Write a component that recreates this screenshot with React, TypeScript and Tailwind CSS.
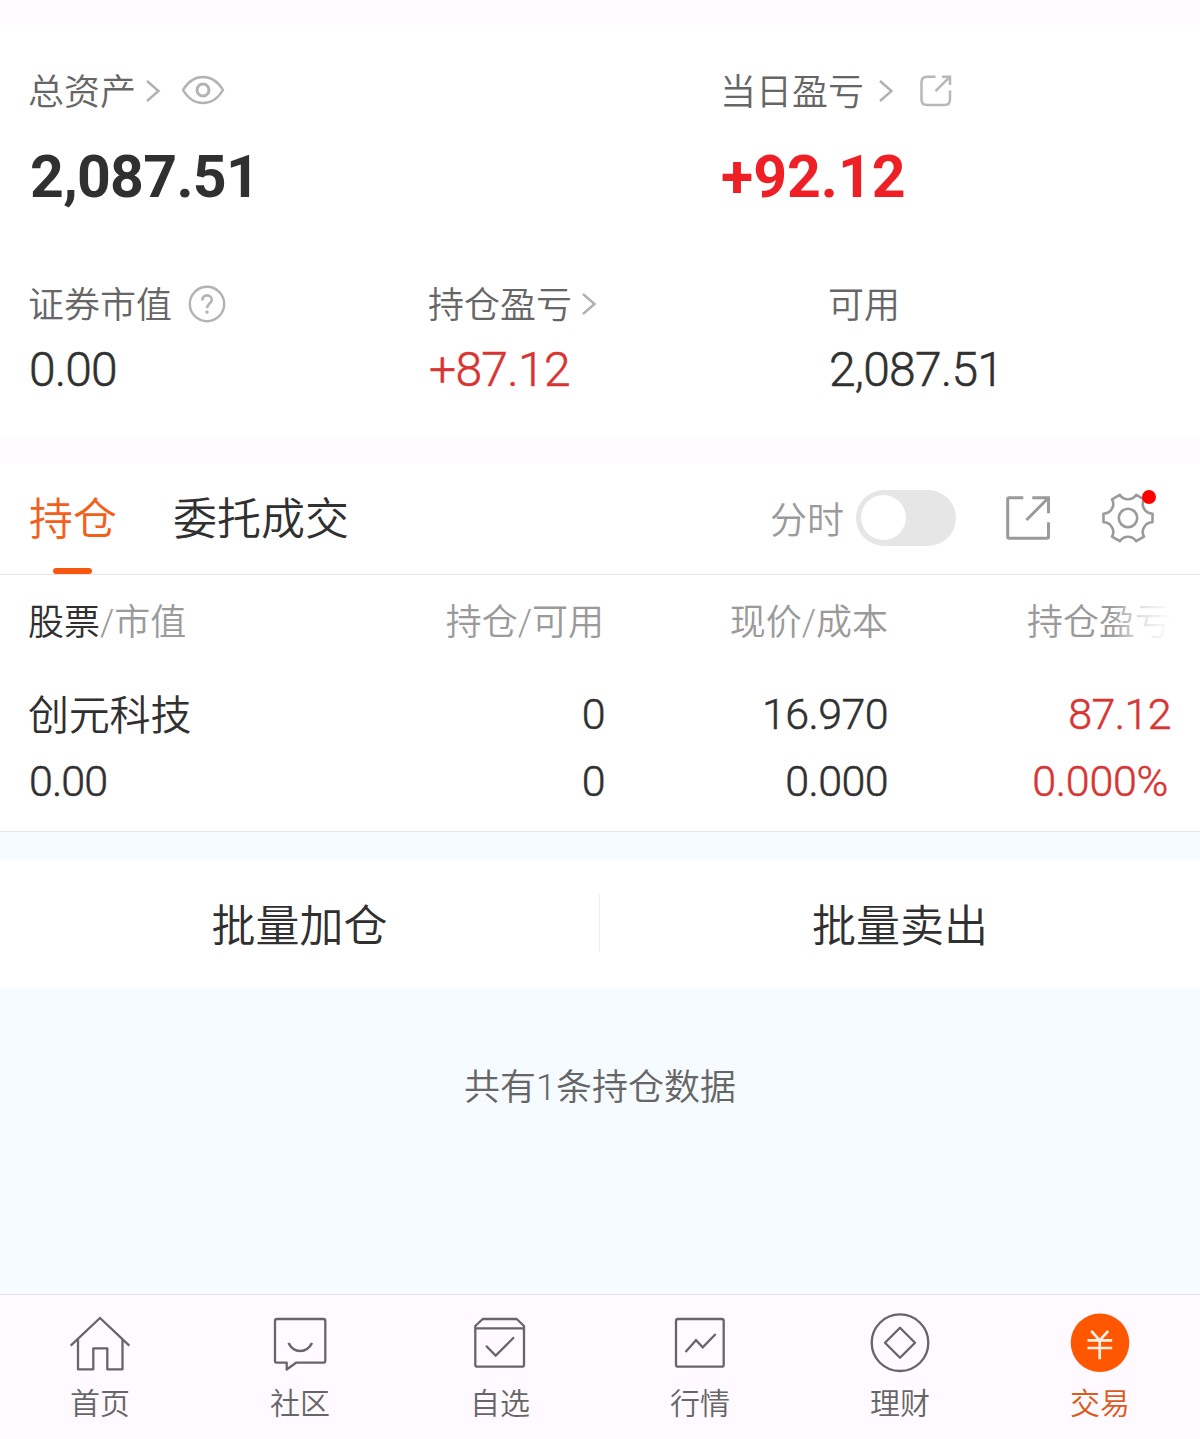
import type { ReactNode } from "react";

const holdings = [
    { name: "创元科技", value: "0.00", amount: "0", usable: "0", price: "16.970", cost: "0.000", profit: "87.12", rate: "0.000%" },
];

function Chevron({ className = "" }: { className?: string }) {
    return (
        <svg viewBox="0 0 16 24" className={`w-4 h-6 shrink-0 ${className}`} fill="none" stroke="#b0b0b0" strokeWidth="2.4">
            <path d="M2 2 L13.5 12 L2 22" />
        </svg>
    );
}

function EyeIcon() {
    return (
        <svg viewBox="0 0 44 30" className="w-11 h-[30px] shrink-0" fill="none" stroke="#b3b3b3" strokeWidth="2.4" strokeLinejoin="round">
            <path d="M2 15 C7 6.500 13 2 22 2 S37 6.500 42 15 C37 23.500 31 28 22 28 S7 23.500 2 15 Z" />
            <circle cx="22" cy="15" r="6" strokeWidth="3" />
        </svg>
    );
}

function ShareSmall() {
    return (
        <svg viewBox="0 0 34 34" className="w-[34px] h-[34px] shrink-0" fill="none" stroke="#b8b8b8" strokeWidth="2.5">
            <path d="M16.500 2.700 H8 Q2.500 2.700 2.500 8.200 V25.500 Q2.500 31 8 31 H25.500 Q31 31 31 25.500 V16.500" />
            <path d="M23 2.700 H31 V11 M31 2.700 L16.500 17.200" />
        </svg>
    );
}

function ShareLarge() {
    return (
        <svg viewBox="0 0 46 46" className="w-[46px] h-[46px] shrink-0" fill="none" stroke="#9a9a9a" strokeWidth="3">
            <path d="M18.300 2.700 H4 Q2.700 2.700 2.700 4 V42 Q2.700 43.300 4 43.300 H42 Q43.500 43.300 43.500 42 V27.300" />
            <path d="M27.300 2.700 H43.500 V18.300 M43.500 2.700 L21.500 25" />
        </svg>
    );
}

function GearIcon() {
    return (
        <svg viewBox="-27 -27 54 54" className="w-[54px] h-[54px]" fill="none" stroke="#9a9a9a" strokeWidth="2.6" strokeLinejoin="round">
            <path d="M24.500 4.300 A9.700 9.700 0 0 0 16 18.700 L8.200 23.200 A9.700 9.700 0 0 0 -8.200 23.200 L-16 18.700 A9.700 9.700 0 0 0 -24.500 4.300 V-4.300 A9.700 9.700 0 0 0 -16 -18.700 L-8.200 -23.200 A9.700 9.700 0 0 0 8.200 -23.200 L16 -18.700 A9.700 9.700 0 0 0 24.500 -4.300 Z" />
            <circle r="9.2" />
        </svg>
    );
}

function HelpIcon() {
    return (
        <svg viewBox="0 0 38 38" className="w-[38px] h-[38px] shrink-0" fill="none" stroke="#b3b3b3" strokeWidth="2.4">
            <circle cx="19" cy="19" r="17.2" />
            <path d="M14.300 15.500 C14.300 12.300 16.300 10.400 19 10.400 S23.800 12.300 23.800 15 C23.800 18.200 19 18.600 19 23.300" strokeWidth="2.6" />
            <path d="M19 25.600 V28.600" strokeWidth="3" />
        </svg>
    );
}

function NavItem({ label, active, children }: { label: string; active?: boolean; children: ReactNode }) {
    return (
        <a className={`flex flex-col items-center pt-4 ${active ? "text-[#dd5a1c]" : "text-[#666]"}`}>
            <svg viewBox="0 0 64 64" className="w-16 h-16" fill="none" stroke="currentColor" strokeWidth="2.3">
                {children}
            </svg>
            <span className="mt-[9px] text-[30px] leading-10">{label}</span>
        </a>
    );
}

export default function App() {
    return (
        <div className="w-[1200px] h-[1439px] flex flex-col overflow-hidden bg-[#f6fbff] text-[#303030] whitespace-nowrap font-[350] font-['Roboto','Noto_Sans_CJK_SC',sans-serif]">
            <div className="h-6 shrink-0 bg-[#fefaff]" />

            <section className="h-[415px] shrink-0 bg-white pt-12">
                <div className="flex pl-[29px]">
                    <div className="w-[692px]">
                        <div className="flex items-center h-10 text-[36px] text-[#666]">
                            <span className="-ml-px pt-0.5 leading-10">总资产</span>
                            <Chevron className="ml-[9px] -mt-0.5" />
                            <span className="ml-[20px] -mt-1"><EyeIcon /></span>
                        </div>
                        <div className="mt-[35px] h-[59px] pl-px text-[59px] leading-[60px] font-bold tracking-[-0.7px]">2,087.51</div>
                    </div>
                    <div>
                        <div className="flex items-center h-10 text-[36px] text-[#666]">
                            <span className="-ml-px pt-0.5 leading-10">当日盈亏</span>
                            <Chevron className="ml-[14px] -mt-0.5" />
                            <span className="ml-[25px] -mt-0.5"><ShareSmall /></span>
                        </div>
                        <div className="mt-[35px] h-[59px] text-[59px] leading-[60px] font-bold text-[#ee2026]">+92.12</div>
                    </div>
                </div>

                <div className="grid grid-cols-3 mt-[78px]">
                    <div className="pl-[29px]">
                        <div className="flex items-center h-10 text-[36px] text-[#666]">
                            <span className="pt-1 -ml-px leading-10">证券市值</span>
                            <span className="ml-4 -mt-px"><HelpIcon /></span>
                        </div>
                        <div className="mt-[21px] text-[48px] leading-[50px] tracking-[-0.9px] [-webkit-text-stroke:0.5px]">0.00</div>
                    </div>
                    <div className="pl-[29px]">
                        <div className="flex items-center h-10 text-[36px] text-[#666]">
                            <span className="pt-1 -ml-px leading-10">持仓盈亏</span>
                            <Chevron className="ml-[9px]" />
                        </div>
                        <div className="mt-[21px] text-[48px] leading-[50px] tracking-[-0.7px] [-webkit-text-stroke:0.5px] text-[#d83431]">+87.12</div>
                    </div>
                    <div className="pl-7">
                        <div className="h-10 pt-0.5 text-[36px] leading-10 text-[#666]">可用</div>
                        <div className="ml-px mt-[21px] text-[48px] leading-[50px] tracking-[-0.8px] [-webkit-text-stroke:0.5px]">2,087.51</div>
                    </div>
                </div>
            </section>

            <div className="h-6 shrink-0 bg-[#fefaff]" />

            <section className="shrink-0 bg-white border-b border-[#e8e8e8]">
                <div className="flex items-center h-28 pl-[29px] border-b border-[#e3e3e3] text-[44px]">
                    <div className="relative h-full flex items-center pt-[3px] text-[#f2601c]">
                        持仓
                        <span className="absolute bottom-0 left-6 w-[39px] h-1.5 rounded-full bg-[#f8570f]" />
                    </div>
                    <div className="ml-14 pt-[3px]">委托成交</div>
                    <div className="flex items-center ml-auto mr-[45px] pb-0.5">
                        <span className="text-[37px] text-[#9a9a9a] pt-2">分时</span>
                        <button className="ml-3 w-[100px] h-14 rounded-full bg-[#e6e6e6] pl-[5px]">
                            <span className="block w-[45px] h-[45px] rounded-full bg-white" />
                        </button>
                        <span className="ml-[49px]"><ShareLarge /></span>
                        <div className="relative ml-[50px]">
                            <GearIcon />
                            <span className="absolute -top-px right-[-1px] w-3.5 h-3.5 rounded-full bg-[#ff0000]" />
                        </div>
                    </div>
                </div>

                <div className="grid grid-cols-[275px_301px_284px_283px] pl-7 h-[92px] pt-7 text-[36px] leading-10 text-[#9a9a9a] text-right">
                    <div className="text-left"><span className="text-[#303030]">股票</span>/市值</div>
                    <div>持仓/可用</div>
                    <div>现价/成本</div>
                    <div className="relative">
                        持仓盈亏
                        <span className="absolute right-0 top-0 w-[60px] h-11 bg-linear-to-r from-white/0 via-white/70 to-white" />
                    </div>
                </div>

                {holdings.map((item) => (
                    <div key={item.name} className="grid grid-cols-[276px_301px_283px_283px] pl-7 pt-3.5 pb-4 text-[43px] leading-[67px] tracking-[-0.6px] text-right [-webkit-text-stroke:0.5px]">
                        <div className="h-[67px] pt-0.5 text-left text-[41px] tracking-[-0.2px] [-webkit-text-stroke:0px]">{item.name}</div>
                        <div>{item.amount}</div>
                        <div>{item.price}</div>
                        <div className="text-[#d83431]">{item.profit}</div>
                        <div className="pl-px text-left tracking-[-0.9px]">{item.value}</div>
                        <div>{item.usable}</div>
                        <div>{item.cost}</div>
                        <div className="pr-[3px] tracking-[-0.3px] text-[#d83431]">{item.rate}</div>
                    </div>
                ))}
            </section>

            <section className="grid grid-cols-2 shrink-0 mt-7 h-32 bg-white text-[44px]">
                <button className="relative pt-1.5 pr-px">
                    批量加仓
                    <span className="absolute right-0 top-[34px] w-px h-[58px] bg-[#f0f0f0]" />
                </button>
                <button className="pt-1.5">批量卖出</button>
            </section>

            <p className="mt-20 text-center text-[36px] leading-10 text-[#666]">共有1条持仓数据</p>

            <nav className="grid grid-cols-6 shrink-0 mt-auto h-[145px] border-t border-[#e2e4e8] bg-[#fefaff]">
                <NavItem label="首页">
                    <path d="M2.700 34.700 L32 7 L61.300 34.700" />
                    <path d="M10 28.500 V58.300 H25.300 V37.300 H39.300 V58.300 H54.500 V28.500" strokeLinejoin="round" />
                </NavItem>
                <NavItem label="社区">
                    <path d="M9 8 H55.300 Q57.300 8 57.300 10 V49.700 Q57.300 51.700 55.300 51.700 H28 L18.700 58.500 V51.700 H9 Q7 51.700 7 49.700 V10 Q7 8 9 8 Z" strokeLinejoin="round" />
                    <path d="M20.500 32 Q24.500 40 32.200 40 T44 32" strokeWidth="2.6" />
                </NavItem>
                <NavItem label="自选">
                    <path d="M14.700 8 H48.700 L56 15 V53.700 Q56 55.700 54 55.700 H9.300 Q7.300 55.700 7.300 53.700 V15 Z M7.300 17.300 H56" strokeLinejoin="round" />
                    <path d="M18 34.700 L27.700 44.500 L46 26.300" />
                </NavItem>
                <NavItem label="行情">
                    <rect x="8" y="8" width="47.700" height="47.700" rx="2" />
                    <path d="M17.500 41 L28 29.300 L34.700 36.300 L47.700 23" />
                </NavItem>
                <NavItem label="理财">
                    <circle cx="32" cy="31.700" r="28.300" />
                    <path d="M32 16.700 L47 31.700 L32 46.700 L17 31.700 Z" strokeLinejoin="round" />
                </NavItem>
                <NavItem label="交易" active>
                    <circle cx="32" cy="31.700" r="29.300" fill="#ff5600" stroke="none" />
                    <path d="M23.300 20 L31.700 29.300 L40.200 20 M19.500 29.300 H44.200 M19.500 37 H44.200 M31.700 29.300 V48.300" stroke="#fff0e2" strokeWidth="2.7" />
                </NavItem>
            </nav>
        </div>
    );
}
